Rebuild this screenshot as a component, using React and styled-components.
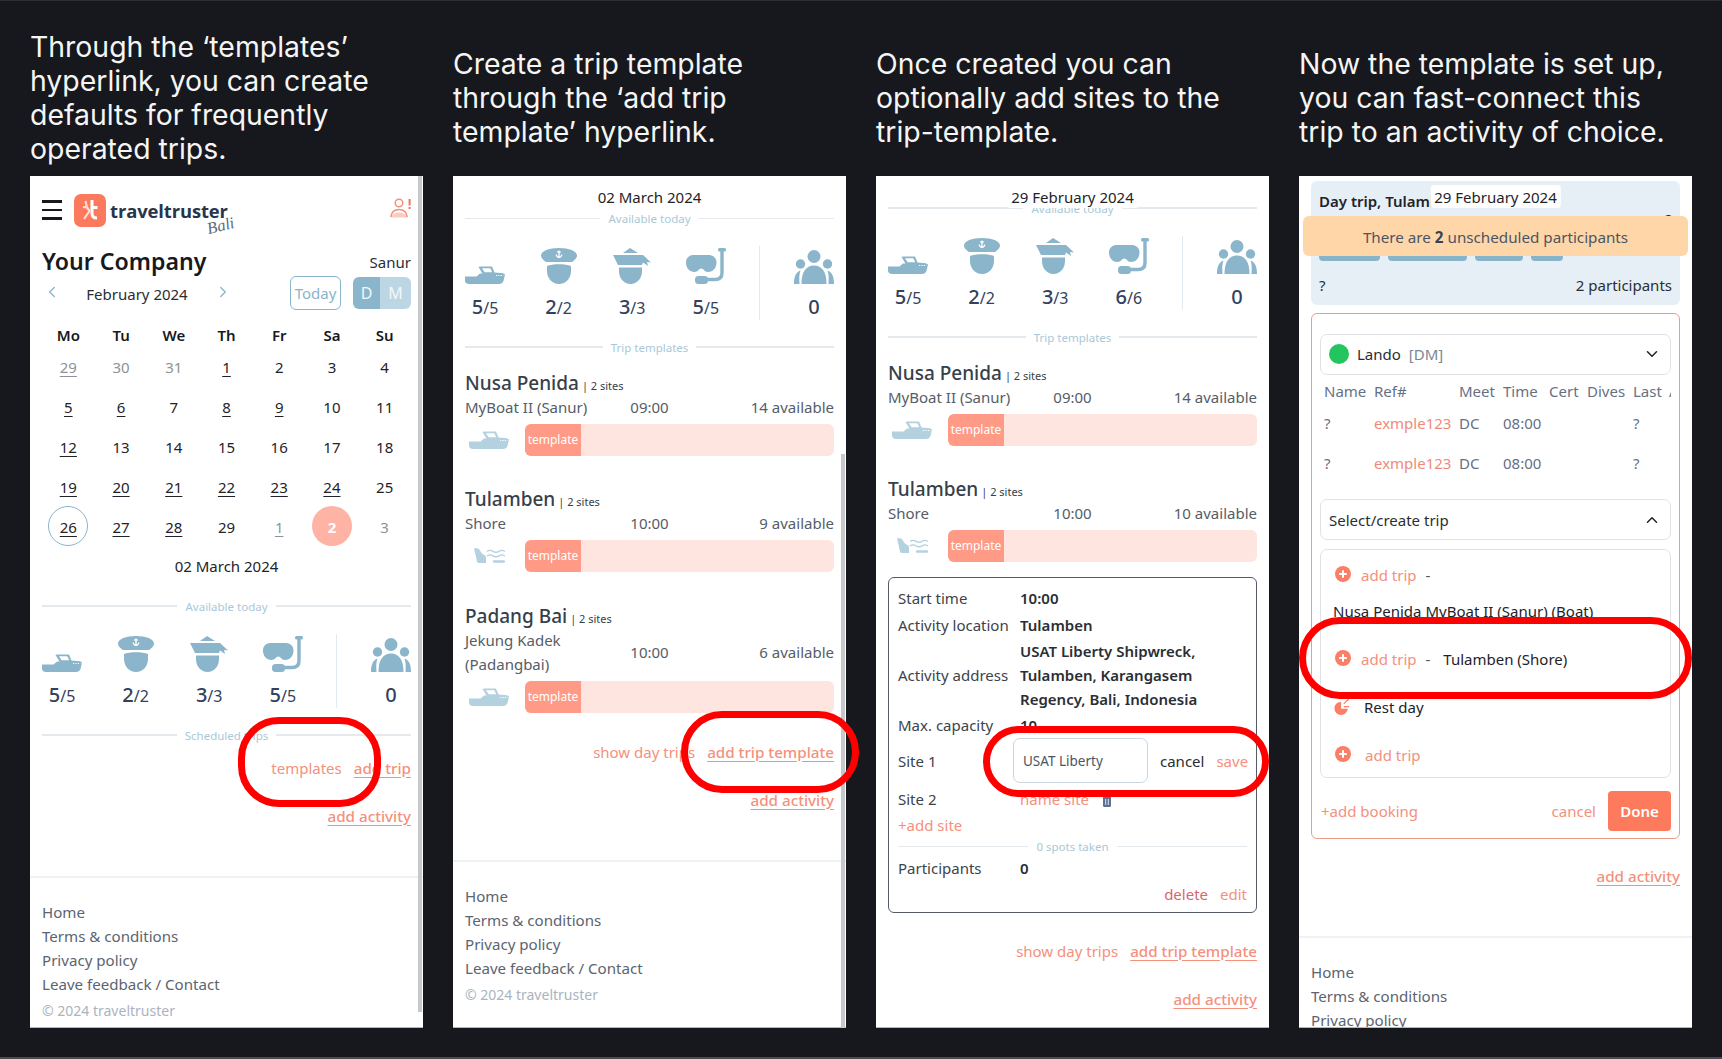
import React from "react";
import styled, { createGlobalStyle } from "styled-components";
import { ChevronLeft, ChevronRight, ChevronDown, ChevronUp } from "lucide-react";

const SALMON = "#f5907c";
const BLUE = "#8ab5ca";
const PALE = "#b4d1df";
const UI = '"Noto Sans", "Open Sans", sans-serif';

const Global = createGlobalStyle`
  html, body { margin: 0; padding: 0; background: #16181d; }
  #root { width: 1722px; height: 1059px; overflow: hidden; }
  * { box-sizing: border-box; }
`;

const Page = styled.div`
  width: 1722px;
  height: 1059px;
  background: #16181d;
  border-top: 1px solid #2b2d32;
  border-bottom: 2px solid #4a4c50;
  padding: 0 30px;
  display: grid;
  grid-template-columns: repeat(4, 393px);
  grid-template-rows: 175px 852px;
  column-gap: 30px;
`;

const Caption = styled.h2`
  margin: 0;
  align-self: center;
  padding-top: 19px;
  font-family: Inter, sans-serif;
  font-weight: 400;
  font-size: 28.4px;
  line-height: 34px;
  color: #f5f5f5;
  white-space: pre-line;
`;

const Phone = styled.div`
  position: relative;
  width: 393px;
  height: 852px;
  grid-row: 2;
`;

const Screen = styled.div`
  width: 393px;
  height: 852px;
  background: #fff;
  border-bottom: 1px solid #b5b7ba;
  overflow: hidden;
  padding: ${(p) => p.$top || 0}px 12px 0;
  display: flex;
  flex-direction: column;
  font-family: ${UI};
  font-size: 15px;
  line-height: 24px;
  color: #1f2329;
  > * { flex: none; }
`;

const Ring = styled.div`
  position: absolute;
  left: ${(p) => p.$x}px;
  top: ${(p) => p.$y}px;
  width: ${(p) => p.$w}px;
  height: ${(p) => p.$h}px;
  border: 7px solid #ff0000;
  border-radius: 41px;
  z-index: 5;
  pointer-events: none;
`;

const Scrollbar = styled.div`
  position: absolute;
  right: 1px;
  top: ${(p) => p.$y}px;
  width: 4px;
  height: ${(p) => p.$h}px;
  background: #c6c8ca;
  z-index: 2;
`;

const FloatDate = styled.div`
  position: absolute;
  top: 9px;
  left: 50%;
  transform: translateX(-50%);
  height: 23px;
  padding: 0 ${(p) => p.$pad}px;
  background: #fff;
  border-radius: 3px;
  font-family: ${UI};
  font-size: 15px;
  line-height: 24px;
  white-space: nowrap;
  color: #1f2329;
  z-index: 3;
`;

const Header = styled.div`
  height: 68px;
  display: flex;
  align-items: center;
`;
const Burger = styled.div`
  width: 20px;
  display: flex;
  flex-direction: column;
  gap: 6px;
  margin-right: 12px;
  span { height: 2.5px; background: #17191c; display: block; }
`;
const LogoBox = styled.div`
  width: 32px;
  height: 33px;
  border-radius: 7px;
  background: #fb7a5e;
  display: flex;
  align-items: center;
  justify-content: center;
  flex: none;
`;
const LogoWords = styled.div`
  position: relative;
  margin: 2px 0 0 4px;
  font-family: "Open Sans", sans-serif;
  font-weight: 700;
  font-size: 18.4px;
  line-height: 24px;
  letter-spacing: -0.1px;
  color: #27354d;
`;
const Script = styled.span`
  position: absolute;
  right: -7px;
  top: 15px;
  font-family: "Liberation Serif", serif;
  font-style: italic;
  font-weight: 400;
  font-size: 16.5px;
  letter-spacing: 0;
  color: #5d6a7c;
  transform: rotate(-14deg);
`;
const HeaderEnd = styled.div`
  margin-left: auto;
  margin-top: -4px;
  display: flex;
`;

const TitleRow = styled.div`
  margin-top: 4px;
  height: 28px;
  display: flex;
  align-items: center;
  justify-content: space-between;
`;
const Company = styled.h1`
  margin: 0;
  font-size: 23.1px;
  font-weight: 600;
  line-height: 26px;
  padding-bottom: 2px;
  color: #17191c;
`;
const Region = styled.span`
  font-size: 15px;
  color: #2a2e34;
`;

const CalNav = styled.div`
  height: 34px;
  display: flex;
  align-items: center;
`;
const MonthPicker = styled.div`
  width: 190px;
  display: flex;
  align-items: center;
  justify-content: space-between;
  padding: 0 0 0 1px;
  color: ${BLUE};
  span { color: #2a2e34; font-size: 15px; margin-left: -1px; padding-top: 2px; }
  svg { margin-top: -3px; }
`;
const TodayBtn = styled.div`
  margin-left: auto;
  width: 51px;
  height: 34px;
  border: 1px solid ${BLUE};
  border-radius: 6px;
  display: flex;
  align-items: center;
  justify-content: center;
  color: ${BLUE};
  font-size: 15px;
`;
const Toggle = styled.div`
  margin-left: 12px;
  width: 58px;
  height: 32px;
  border-radius: 6px;
  overflow: hidden;
  display: grid;
  grid-template-columns: 27px 31px;
`;
const ToggleCell = styled.div`
  background: ${(p) => (p.$on ? "#8ab5ca" : "#bcd6e3")};
  color: #f2f7fa;
  display: flex;
  align-items: center;
  justify-content: center;
  font-size: 16px;
`;

const WeekHead = styled.div`
  margin-top: 14px;
  height: 22px;
  line-height: 20px;
  display: grid;
  grid-template-columns: repeat(7, 1fr);
  justify-items: center;
  align-items: center;
  font-weight: 600;
  font-size: 15px;
  color: #17191c;
`;
const Days = styled.div`
  display: grid;
  grid-template-columns: repeat(7, 1fr);
  grid-auto-rows: 40px;
  justify-items: center;
`;
const Day = styled.div`
  width: 40px;
  height: 40px;
  padding-top: 1px;
  border-radius: 50%;
  display: flex;
  align-items: center;
  justify-content: center;
  font-size: 15px;
  font-weight: ${(p) => (p.$selected ? 700 : 400)};
  color: ${(p) => (p.$selected ? "#fff" : p.$muted ? "#8f9296" : "#1f2329")};
  text-decoration: ${(p) => (p.$link ? "underline" : "none")};
  text-underline-offset: 3px;
  background: ${(p) => (p.$selected ? "#ffb3a5" : "transparent")};
  border: ${(p) => (p.$today ? `1.5px solid ${BLUE}` : "none")};
`;
const DateLine = styled.div`
  margin-top: ${(p) => p.$mt || 0}px;
  height: 24px;
  line-height: 22px;
  text-align: center;
  font-size: 15px;
  color: #1f2329;
`;

const Rule = styled.div`
  margin-top: ${(p) => p.$mt || 0}px;
  height: 16px;
  padding-top: 2px;
  display: flex;
  align-items: center;
  gap: 8px;
  font-size: 11.5px;
  line-height: 16px;
  color: #a9c8d7;
  white-space: nowrap;
  &::before, &::after {
    content: "";
    flex: 1;
    margin-top: -2px;
    height: ${(p) => p.$line || 2}px;
    background: #e4e9ee;
  }
`;

const Stats = styled.div`
  margin-top: 20px;
  height: 74px;
  display: flex;
  justify-content: space-between;
`;
const Stat = styled.div`
  width: 40px;
  display: flex;
  flex-direction: column;
  align-items: center;
`;
const StatIcon = styled.div`
  height: 38px;
  display: flex;
  align-items: flex-end;
  justify-content: center;
`;
const StatNum = styled.div`
  margin-top: 10px;
  height: 26px;
  line-height: 26px;
  font-size: 20px;
  font-weight: 500;
  color: #33415c;
  white-space: nowrap;
  small { font-size: 16px; font-weight: 400; }
`;
const StatDivider = styled.div`
  width: 1px;
  background: #e1ebf1;
`;

const LinkRow = styled.div`
  margin-top: ${(p) => p.$mt || 0}px;
  height: 24px;
  line-height: 22px;
  display: flex;
  justify-content: flex-end;
  gap: 12px;
  white-space: nowrap;
`;
const Soft = styled.span`
  color: ${SALMON};
  font-size: 15px;
  margin-left: ${(p) => p.$ml || 0}px;
`;
const Strong = styled.span`
  color: ${SALMON};
  font-size: 15.2px;
  font-weight: 500;
  text-decoration: underline;
  text-underline-offset: 3px;
`;

const Footer = styled.div`
  margin: 47px -12px 0;
  padding: 23px 12px 0;
  border-top: 2px solid #f0f1f3;
`;
const FootLink = styled.div`
  height: 24px;
  line-height: 22px;
  color: #5b6470;
  font-size: 15.1px;
`;
const Copy = styled.div`
  margin-top: 3px;
  height: 24px;
  line-height: 22px;
  color: #aab4c0;
  font-size: 14px;
`;

const Trip = styled.div`
  margin-top: ${(p) => p.$mt || 0}px;
`;
const TripName = styled.div`
  height: 28px;
  line-height: 30px;
  font-size: 19px;
  font-weight: 500;
  color: #374049;
  white-space: nowrap;
  small { font-size: 11px; font-weight: 400; margin-left: 3px; }
`;
const TripInfo = styled.div`
  margin-top: -1px;
  display: grid;
  grid-template-columns: 1fr auto 1fr;
  align-items: center;
  color: #555d67;
  font-size: 15px;
  white-space: nowrap;
  > :last-child { text-align: right; }
`;
const BarRow = styled.div`
  margin-top: 4px;
  height: 33px;
  display: grid;
  grid-template-columns: 60px 1fr;
  align-items: center;
`;
const BarIcon = styled.div`
  display: flex;
  justify-content: center;
  padding-right: 12px;
`;
const Bar = styled.div`
  height: 32px;
  border-radius: 6px;
  background: #fee5e0;
  overflow: hidden;
`;
const BarFill = styled.div`
  width: 56px;
  height: 100%;
  background: #fe9a85;
  color: #fff;
  font-size: 12px;
  line-height: 32px;
  text-align: center;
`;

const InfoCard = styled.div`
  margin-top: 15px;
  height: 336px;
  border: 1px solid #555c66;
  border-radius: 6px;
  padding: 8px 9px 0;
  color: #3c434c;
`;
const Field = styled.div`
  margin-top: ${(p) => p.$mt || 0}px;
  display: grid;
  grid-template-columns: 122px 1fr;
  align-items: center;
  white-space: nowrap;
  font-size: 15px;
`;
const Val = styled.div`
  font-weight: 600;
  color: #2a2e34;
`;
const SiteEdit = styled.div`
  display: flex;
  align-items: center;
  margin-left: -7px;
`;
const SiteInput = styled.div`
  width: 135px;
  height: 45px;
  padding-left: 9px;
  border: 1px solid #cbd6e1;
  border-radius: 7px;
  display: flex;
  align-items: center;
  font-size: 13.5px;
  color: #4b5563;
`;
const Cancel = styled.span`
  margin-left: 12px;
  color: #2a2e34;
`;
const Danger = styled.span`
  color: #d9656f;
`;
const Actions = styled.div`
  margin-top: 2px;
  height: 24px;
  display: flex;
  justify-content: flex-end;
  gap: 12px;
`;
const AddSite = styled.div`
  margin-top: 2px;
  height: 24px;
`;

const TopCard = styled.div`
  background: #e6eff5;
  border-radius: 6px;
  padding: 9px 8px 7px;
  height: 124px;
`;
const CardTitle = styled.div`
  height: 24px;
  line-height: 22px;
  font-weight: 600;
  color: #1f2329;
  white-space: nowrap;
`;
const CardRow = styled.div`
  margin-top: ${(p) => p.$mt || 0}px;
  height: 24px;
  line-height: 22px;
  display: flex;
  justify-content: ${(p) => (p.$end ? "flex-end" : "space-between")};
  color: #2a2e34;
`;
const Tags = styled.div`
  margin-top: 13px;
  height: 16px;
  display: flex;
  gap: 8px;
`;
const Tag = styled.div`
  width: ${(p) => p.$w}px;
  background: #88b4c9;
  border-radius: 4px;
`;
const Banner = styled.div`
  position: absolute;
  left: 4px;
  right: 4px;
  top: 40px;
  height: 40px;
  padding-top: 2px;
  border-radius: 6px;
  background: #fed6a8;
  color: #4b5563;
  font-family: ${UI};
  font-size: 15.2px;
  display: flex;
  align-items: center;
  justify-content: center;
  z-index: 4;
  b { font-weight: 700; margin: 0 4px; color: #374151; }
`;
const BookingBox = styled.div`
  margin-top: 8px;
  height: 526px;
  border: 1px solid #ee9d8a;
  border-radius: 6px;
  padding: 20px 8px 0;
`;
const Select = styled.div`
  margin-top: ${(p) => p.$mt || 0}px;
  height: 41px;
  border: 1px solid #dfe3e8;
  border-radius: 7px;
  display: flex;
  align-items: center;
  padding: 0 9px ${(p) => p.$lift || 0}px 8px;
  color: #2a2e34;
  svg { margin-left: auto; }
`;
const Dot = styled.span`
  width: 20px;
  height: 20px;
  border-radius: 50%;
  background: #22c55e;
  margin-right: 8px;
`;
const Rank = styled.span`
  margin-left: 8px;
  color: #7a8794;
`;
const Table = styled.div`
  padding-left: 4px;
  overflow: hidden;
`;
const TRow = styled.div`
  margin-top: ${(p) => p.$mt}px;
  height: 24px;
  line-height: 22px;
  display: grid;
  grid-template-columns: 50px 85px 44px 46px 38px 46px 36px 30px;
  color: #667085;
  font-size: 15px;
  white-space: nowrap;
`;
const Ref = styled.span`
  color: #f08a78;
`;
const ListBox = styled.div`
  margin-top: 9px;
  height: 229px;
  border: 1px solid #dfe3e8;
  border-radius: 7px;
`;
const ListRow = styled.div`
  margin-top: ${(p) => p.$mt}px;
  height: 24px;
  line-height: 22px;
  padding-left: ${(p) => p.$pad}px;
  display: flex;
  align-items: center;
  white-space: nowrap;
  color: #1f2329;
`;
const ListIcon = styled.span`
  width: 16px;
  height: 16px;
  margin-right: ${(p) => p.$gap}px;
  margin-top: -2px;
  display: flex;
`;
const Dash = styled.span`
  margin: 0 ${(p) => p.$r}px 0 9px;
  color: #4b5563;
`;
const BookingFoot = styled.div`
  margin-top: 13px;
  height: 40px;
  display: flex;
  align-items: center;
  padding-left: 1px;
`;
const DoneBtn = styled.div`
  margin-left: 12px;
  width: 63px;
  height: 40px;
  border-radius: 4px;
  background: #fe7a5c;
  color: #fff;
  font-weight: 600;
  display: flex;
  align-items: center;
  justify-content: center;
`;
const Push = styled.div`
  margin-left: auto;
`;
const SiteTrash = styled.span`
  margin-left: 13px;
  display: inline-flex;
  vertical-align: middle;
`;

/* ---------- drawings ---------- */
const Boat = ({ c = BLUE }) => (
  <svg width="40" height="18" viewBox="0 0 40 18" fill={c}>
    <path d="M0 10.5H11.5L15 7.5H17.5L13.5 1L15 .5H27L29.5 6.5L38 7.2L40 8.5L38.6 14.5C38 16.8 36.6 18 34 18H4C1.5 18 0 16.8 0 14.5Z" />
    <path fill="#fff" d="M17 2.2H25.3L27.2 6.3H19.6Z" />
    <path fill="none" stroke="#fff" strokeWidth="1.1" strokeDasharray="1.2 1.2" d="M31 9.5H38.5" />
  </svg>
);
const Captain = () => (
  <svg width="36" height="36" viewBox="0 0 36 36" fill={BLUE}>
    <path d="M18 0C28 0 36 3 36 7.5C36 10.5 33 12.5 31 14H5C3 12.5 0 10.5 0 7.5C0 3 8 0 18 0Z" />
    <path d="M6 18C11 15.7 25 15.7 30 18V23C30 30 25 36 18 36C11 36 6 30 6 23Z" />
    <path fill="none" stroke="#fff" strokeWidth="1.3" d="M18 2.5V9M15.2 6.5C15.5 8.4 16.5 9.3 18 9.3C19.5 9.3 20.5 8.4 20.8 6.5M16.3 4H19.7" />
  </svg>
);
const Bandana = () => (
  <svg width="38" height="36" viewBox="0 0 38 36" fill={BLUE}>
    <path d="M17 0L25 5H10Z" />
    <path d="M0 7H30L38 14.5L34 14L35 18L30 14.5L29 17H5Z" />
    <path d="M6 19.5H29V23C29 30.5 24 36 17.5 36C11 36 6 30.5 6 23Z" />
  </svg>
);
const Snorkel = () => (
  <svg width="40" height="36" viewBox="0 0 40 36" fill={BLUE}>
    <path d="M0 14.5C0 9.5 3.5 7 8 7H22C27 7 30.5 9.5 30.5 14.5C30.5 20 27 24 22 24C18.5 24 17.5 20.5 15.3 20.5C13 20.5 12 24 8.5 24C3.5 24 0 20 0 14.5Z" />
    <rect x="32" y="0" width="8" height="3.4" rx="1.5" />
    <path fill="none" stroke={BLUE} strokeWidth="3.4" d="M36 2V25C36 29 33.5 31.5 29 31.5H16" />
    <rect x="9" y="28" width="13" height="8" rx="3.5" />
  </svg>
);
const People = () => (
  <svg width="40" height="34" viewBox="0 0 40 34" fill={BLUE}>
    <circle cx="20" cy="6.5" r="6.5" />
    <circle cx="6.5" cy="14" r="4.7" />
    <circle cx="33.5" cy="14" r="4.7" />
    <path d="M7.5 34C7.5 22 12 15.5 20 15.5C28 15.5 32.5 22 32.5 34Z" />
    <path d="M0 34C0 27 1.5 22.5 6.5 20.5C5 24 5.2 29 5.5 34Z" />
    <path d="M40 34C40 27 38.5 22.5 33.5 20.5C35 24 34.8 29 34.5 34Z" />
  </svg>
);
const ShoreIcon = () => (
  <svg width="31" height="15" viewBox="0 0 31 15" fill={PALE}>
    <path d="M0 .5C1 0 3 0 4 .5C6 1.5 6.5 4 8 5.5C9.5 7 12 7 12 9.5V15H5C3.5 15 3 14 2.7 12.5C2.2 8.5 1 5 0 .5Z" />
    <path fill="none" stroke={PALE} strokeWidth="1.4" d="M13 3.5C15 2 17 2 19 3.3C21 4.6 23 4.6 25 3.3C27 2 29 2 31 3.5M13 8C15 6.5 17 6.5 19 7.8C21 9.1 23 9.1 25 7.8C27 6.5 29 6.5 31 8" />
    <rect x="19" y="12.3" width="12" height="2.5" rx="1" />
  </svg>
);
const Logo = () => (
  <svg width="16" height="22" viewBox="0 0 16 22" fill="none">
    <path stroke="#fff" strokeWidth="3" d="M10 1V14.5C10 17.5 11.8 19 15 19M10 8.5H15.5" />
    <path stroke="#ffdcd3" strokeWidth="2.2" d="M3.5 2L5 8.5L8 12.5M5 8.5L1 8M7.5 12L2 20" />
  </svg>
);
const UserAlert = () => (
  <svg width="21" height="20" viewBox="0 0 21 20" fill="none" stroke={SALMON} strokeWidth="1.5">
    <circle cx="9" cy="5" r="3.8" />
    <path d="M.8 19C1.6 13.5 5 11.5 9 11.5C13 11.5 16.5 13.5 17.3 19" />
    <path fill={SALMON} stroke="none" d="M.8 19.5C2 16 5 14.5 9 14.5C13 14.5 16 16 17.3 19.5Z" opacity=".45" />
    <path stroke="#f2715c" strokeWidth="2" d="M19.6 1V7.5M19.6 9V11" />
  </svg>
);
const PlusDot = () => (
  <svg width="16" height="16" viewBox="0 0 16 16">
    <circle cx="8" cy="8" r="8" fill="#fb7f66" />
    <path stroke="#fff" strokeWidth="2" d="M8 4.2V11.8M4.2 8H11.8" />
  </svg>
);
const RestIcon = () => (
  <svg width="18" height="18" viewBox="0 0 18 18" fill="#fb7f66">
    <path d="M8 3A7.5 7.5 0 1 0 15.5 11H8Z" />
    <path fill="none" stroke="#fb7f66" strokeWidth="1.3" d="M11 5.5L15.5 1H17M11 8.5H17" />
  </svg>
);
const Trash = () => (
  <svg width="10" height="13" viewBox="0 0 10 13" fill="#5b7094">
    <rect x="0" y="1" width="10" height="2" />
    <path d="M1 3H9V11.5C9 12.3 8.5 13 7.7 13H2.3C1.5 13 1 12.3 1 11.5Z" />
    <path stroke="#fff" strokeWidth=".8" d="M3.7 5V11M6.3 5V11" />
  </svg>
);

/* ---------- shared parts ---------- */
const StatsBlock = ({ last }) => {
  const items = [
    [<Boat />, 5],
    [<Captain />, 2],
    [<Bandana />, 3],
    [<Snorkel />, last],
  ];
  return (
    <Stats>
      {items.map(([icon, n], i) => (
        <Stat key={i}>
          <StatIcon>{icon}</StatIcon>
          <StatNum>
            {n}
            <small>/{n}</small>
          </StatNum>
        </Stat>
      ))}
      <StatDivider />
      <Stat>
        <StatIcon><People /></StatIcon>
        <StatNum>0</StatNum>
      </Stat>
    </Stats>
  );
};

const TripBlock = ({ name, info, time, avail, shore, mt }) => (
  <Trip $mt={mt}>
    <TripName>
      {name}
      <small>| 2 sites</small>
    </TripName>
    <TripInfo>
      <div>{info}</div>
      <div>{time}</div>
      <div>{avail}</div>
    </TripInfo>
    <BarRow>
      <BarIcon>{shore ? <ShoreIcon /> : <Boat c={PALE} />}</BarIcon>
      <Bar>
        <BarFill>template</BarFill>
      </Bar>
    </BarRow>
  </Trip>
);

const SiteFooter = ({ short }) => (
  <Footer>
    <FootLink>Home</FootLink>
    <FootLink>Terms &amp; conditions</FootLink>
    <FootLink>Privacy policy</FootLink>
    {!short && <FootLink>Leave feedback / Contact</FootLink>}
    {!short && <Copy>© 2024 traveltruster</Copy>}
  </Footer>
);

const calendar = [
  [["29", { m: 1, l: 1 }], ["30", { m: 1 }], ["31", { m: 1 }], ["1", { l: 1 }], ["2"], ["3"], ["4"]],
  [["5", { l: 1 }], ["6", { l: 1 }], ["7"], ["8", { l: 1 }], ["9", { l: 1 }], ["10"], ["11"]],
  [["12", { l: 1 }], ["13"], ["14"], ["15"], ["16"], ["17"], ["18"]],
  [["19", { l: 1 }], ["20", { l: 1 }], ["21", { l: 1 }], ["22", { l: 1 }], ["23", { l: 1 }], ["24", { l: 1 }], ["25"]],
  [["26", { l: 1, t: 1 }], ["27", { l: 1 }], ["28", { l: 1 }], ["29"], ["1", { m: 1, l: 1 }], ["2", { s: 1 }], ["3", { m: 1 }]],
];

const PanelOne = () => (
  <Phone>
    <Screen>
      <Header>
        <Burger><span /><span /><span /></Burger>
        <LogoBox><Logo /></LogoBox>
        <LogoWords>
          traveltruster
          <Script>Bali</Script>
        </LogoWords>
        <HeaderEnd><UserAlert /></HeaderEnd>
      </Header>
      <TitleRow>
        <Company>Your Company</Company>
        <Region>Sanur</Region>
      </TitleRow>
      <CalNav>
        <MonthPicker>
          <ChevronLeft size={18} strokeWidth={1.8} />
          <span>February 2024</span>
          <ChevronRight size={18} strokeWidth={1.8} />
        </MonthPicker>
        <TodayBtn>Today</TodayBtn>
        <Toggle>
          <ToggleCell $on>D</ToggleCell>
          <ToggleCell>M</ToggleCell>
        </Toggle>
      </CalNav>
      <WeekHead>
        {["Mo", "Tu", "We", "Th", "Fr", "Sa", "Su"].map((d) => <div key={d}>{d}</div>)}
      </WeekHead>
      <Days>
        {calendar.flat().map(([d, o = {}], i) => (
          <Day key={i} $muted={o.m} $link={o.l} $today={o.t} $selected={o.s}>{d}</Day>
        ))}
      </Days>
      <DateLine $mt={9}>02 March 2024</DateLine>
      <Rule $mt={19}>Available today</Rule>
      <StatsBlock last={5} />
      <Rule $mt={19}>Scheduled trips</Rule>
      <LinkRow $mt={14}>
        <Soft>templates</Soft>
        <Strong>add trip</Strong>
      </LinkRow>
      <LinkRow $mt={24}><Strong>add activity</Strong></LinkRow>
      <SiteFooter />
    </Screen>
    <Scrollbar $y={0} $h={836} />
    <Ring $x={208} $y={541} $w={143} $h={90} />
  </Phone>
);

const PanelTwo = () => (
  <Phone>
    <Screen $top={10}>
      <DateLine>02 March 2024</DateLine>
      <Rule $line={1}>Available today</Rule>
      <StatsBlock last={5} />
      <Rule $mt={19}>Trip templates</Rule>
      <TripBlock mt={13} name="Nusa Penida" info="MyBoat II (Sanur)" time="09:00" avail="14 available" />
      <TripBlock mt={28} name="Tulamben" info="Shore" time="10:00" avail="9 available" shore />
      <TripBlock
        mt={29}
        name="Padang Bai"
        info={<>Jekung Kadek<br />(Padangbai)</>}
        time="10:00"
        avail="6 available"
      />
      <LinkRow $mt={28}>
        <Soft>show day trips</Soft>
        <Strong>add trip template</Strong>
      </LinkRow>
      <LinkRow $mt={24}><Strong>add activity</Strong></LinkRow>
      <SiteFooter />
    </Screen>
    <Scrollbar $y={278} $h={574} />
    <Ring $x={228} $y={535} $w={178} $h={82} />
  </Phone>
);

const PanelThree = () => (
  <Phone>
    <Screen $top={24}>
      <Rule>Available today</Rule>
      <StatsBlock last={6} />
      <Rule $mt={19}>Trip templates</Rule>
      <TripBlock mt={13} name="Nusa Penida" info="MyBoat II (Sanur)" time="09:00" avail="14 available" />
      <TripBlock mt={28} name="Tulamben" info="Shore" time="10:00" avail="10 available" shore />
      <InfoCard>
        <Field><span>Start time</span><Val>10:00</Val></Field>
        <Field $mt={3}><span>Activity location</span><Val>Tulamben</Val></Field>
        <Field $mt={2}>
          <span>Activity address</span>
          <Val>USAT Liberty Shipwreck,<br />Tulamben, Karangasem<br />Regency, Bali, Indonesia</Val>
        </Field>
        <Field $mt={2}><span>Max. capacity</span><Val>10</Val></Field>
        <Field $mt={1}>
          <span>Site 1</span>
          <SiteEdit>
            <SiteInput>USAT Liberty</SiteInput>
            <Cancel>cancel</Cancel>
            <Soft $ml={12}>save</Soft>
          </SiteEdit>
        </Field>
        <Field $mt={4}>
          <span>Site 2</span>
          <div>
            <Soft>name site</Soft>
            <SiteTrash><Trash /></SiteTrash>
          </div>
        </Field>
        <AddSite><Soft>+add site</Soft></AddSite>
        <Rule $mt={1} $line={1}>0 spots taken</Rule>
        <Field $mt={2}><span>Participants</span><Val>0</Val></Field>
        <Actions>
          <Danger>delete</Danger>
          <Soft>edit</Soft>
        </Actions>
      </InfoCard>
      <LinkRow $mt={27}>
        <Soft>show day trips</Soft>
        <Strong>add trip template</Strong>
      </LinkRow>
      <LinkRow $mt={24}><Strong>add activity</Strong></LinkRow>
    </Screen>
    <FloatDate $pad={5}>29 February 2024</FloatDate>
    <Ring $x={107} $y={550} $w={286} $h={71} />
  </Phone>
);

const PanelFour = () => (
  <Phone>
    <Screen $top={5}>
      <TopCard>
        <CardTitle>Day trip, Tulamben</CardTitle>
        <CardRow $mt={-6} $end><span>?</span></CardRow>
        <Tags>
          <Tag $w={61} />
          <Tag $w={79} />
          <Tag $w={48} />
          <Tag $w={32} />
        </Tags>
        <CardRow $mt={13}>
          <span>?</span>
          <span>2 participants</span>
        </CardRow>
      </TopCard>
      <BookingBox>
        <Select $lift={1}>
          <Dot />
          Lando
          <Rank>[DM]</Rank>
          <ChevronDown size={18} strokeWidth={2} color="#1f2329" />
        </Select>
        <Table>
          <TRow $mt={5}>
            <span>Name</span><span>Ref#</span><span>Meet</span><span>Time</span>
            <span>Cert</span><span>Dives</span><span>Last</span><span>Agent</span>
          </TRow>
          <TRow $mt={8}>
            <span>?</span><Ref>exmple123</Ref><span>DC</span><span>08:00</span>
            <span /><span /><span>?</span><span />
          </TRow>
          <TRow $mt={16}>
            <span>?</span><Ref>exmple123</Ref><span>DC</span><span>08:00</span>
            <span /><span /><span>?</span><span />
          </TRow>
        </Table>
        <Select $mt={23}>
          Select/create trip
          <ChevronUp size={18} strokeWidth={2} color="#1f2329" />
        </Select>
        <ListBox>
          <ListRow $mt={13} $pad={14}>
            <ListIcon $gap={10}><PlusDot /></ListIcon>
            <Soft>add trip</Soft>
            <Dash $r={0}>-</Dash>
          </ListRow>
          <ListRow $mt={12} $pad={12}>Nusa Penida MyBoat II (Sanur) (Boat)</ListRow>
          <ListRow $mt={24} $pad={14}>
            <ListIcon $gap={10}><PlusDot /></ListIcon>
            <Soft>add trip</Soft>
            <Dash $r={13}>-</Dash>
            Tulamben (Shore)
          </ListRow>
          <ListRow $mt={24} $pad={13}>
            <ListIcon $gap={14}><RestIcon /></ListIcon>
            Rest day
          </ListRow>
          <ListRow $mt={24} $pad={14}>
            <ListIcon $gap={14}><PlusDot /></ListIcon>
            <Soft>add trip</Soft>
          </ListRow>
        </ListBox>
        <BookingFoot>
          <Soft>+add booking</Soft>
          <Push />
          <Soft>cancel</Soft>
          <DoneBtn>Done</DoneBtn>
        </BookingFoot>
      </BookingBox>
      <LinkRow $mt={26}><Strong>add activity</Strong></LinkRow>
      <SiteFooter short />
    </Screen>
    <FloatDate $pad={4}>29 February 2024</FloatDate>
    <Banner>There are<b>2</b>unscheduled participants</Banner>
    <Ring $x={0} $y={441} $w={393} $h={82} />
  </Phone>
);

export default function App() {
  return (
    <>
      <Global />
      <Page>
        <Caption>{"Through the ‘templates’\nhyperlink, you can create\ndefaults for frequently\noperated trips."}</Caption>
        <Caption>{"Create a trip template\nthrough the ‘add trip\ntemplate’ hyperlink."}</Caption>
        <Caption>{"Once created you can\noptionally add sites to the\ntrip-template."}</Caption>
        <Caption>{"Now the template is set up,\nyou can fast-connect this\ntrip to an activity of choice."}</Caption>
        <PanelOne />
        <PanelTwo />
        <PanelThree />
        <PanelFour />
      </Page>
    </>
  );
}
